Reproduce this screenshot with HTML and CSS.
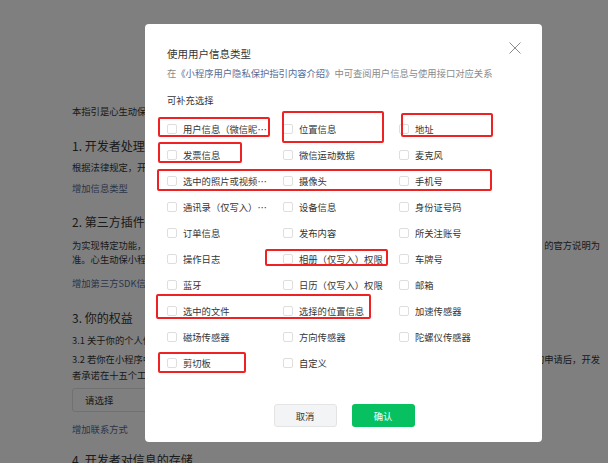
FILE: index.html
```html
<!DOCTYPE html>
<html lang="zh-CN">
<head>
    <meta charset="UTF-8">
    <meta name="viewport" content="width=device-width, initial-scale=1.0">
    <title>用户隐私保护指引</title>
    <link rel="stylesheet" href="styles.css">
</head>
<body>
    <div class="page">
        <p class="intro">本指引是心生动保小程序开发者为处理你的个人信息而制定。</p>

        <h2 class="sec-title">1. 开发者处理的信息</h2>
        <p class="para">根据法律规定，开发者仅处理实现小程序功能所必要的信息。</p>
        <a class="add-link">增加信息类型</a>

        <h2 class="sec-title sec-2">2. 第三方插件信息</h2>
        <p class="para line"><span>为实现特定功能，开发者可能会接入由第三方提供的插件。</span><span>的官方说明为</span></p>
        <p class="para">准。心生动保小程序已接入的第三方插件信息如下：</p>
        <a class="add-link link-sdk">增加第三方SDK信息</a>

        <h2 class="sec-title sec-3">3. 你的权益</h2>
        <p class="para p-31">3.1 关于你的个人信息，你可以通过以下方式与开发者联系。</p>
        <p class="para p-32 line"><span>3.2 若你在小程序中的个人信息受到侵害，</span><span>的申请后，开发</span></p>
        <p class="para p-32b">者承诺在十五个工作日内回复并处理。</p>
        <div class="select">请选择</div>
        <a class="add-link link-contact">增加联系方式</a>

        <h2 class="sec-title sec-4">4. 开发者对信息的存储</h2>
    </div>

    <div class="overlay">
        <div class="modal">
            <div class="modal-header">
                <h3 class="modal-title">使用用户信息类型</h3>
                <span class="close">
                    <svg width="12" height="12" viewBox="0 0 12 12"><path d="M0.5 0.5 L11.5 11.5 M11.5 0.5 L0.5 11.5" stroke="#8c8c8c" stroke-width="1" fill="none"/></svg>
                </span>
            </div>
            <p class="modal-desc">在<a class="desc-link">《小程序用户隐私保护指引内容介绍》</a>中可查阅用户信息与使用接口对应关系</p>
            <p class="modal-sub">可补充选择</p>

            <div class="check-grid">
                <label class="check"><span class="box"></span><span class="text">用户信息（微信昵称、头像）</span></label>
                <label class="check"><span class="box"></span><span class="text">位置信息</span></label>
                <label class="check"><span class="box"></span><span class="text">地址</span></label>

                <label class="check"><span class="box"></span><span class="text">发票信息</span></label>
                <label class="check"><span class="box"></span><span class="text">微信运动数据</span></label>
                <label class="check"><span class="box"></span><span class="text">麦克风</span></label>

                <label class="check"><span class="box"></span><span class="text">选中的照片或视频信息</span></label>
                <label class="check"><span class="box"></span><span class="text">摄像头</span></label>
                <label class="check"><span class="box"></span><span class="text">手机号</span></label>

                <label class="check"><span class="box"></span><span class="text">通讯录（仅写入）权限</span></label>
                <label class="check"><span class="box"></span><span class="text">设备信息</span></label>
                <label class="check"><span class="box"></span><span class="text">身份证号码</span></label>

                <label class="check"><span class="box"></span><span class="text">订单信息</span></label>
                <label class="check"><span class="box"></span><span class="text">发布内容</span></label>
                <label class="check"><span class="box"></span><span class="text">所关注账号</span></label>

                <label class="check"><span class="box"></span><span class="text">操作日志</span></label>
                <label class="check"><span class="box"></span><span class="text">相册（仅写入）权限</span></label>
                <label class="check"><span class="box"></span><span class="text">车牌号</span></label>

                <label class="check"><span class="box"></span><span class="text">蓝牙</span></label>
                <label class="check"><span class="box"></span><span class="text">日历（仅写入）权限</span></label>
                <label class="check"><span class="box"></span><span class="text">邮箱</span></label>

                <label class="check"><span class="box"></span><span class="text">选中的文件</span></label>
                <label class="check"><span class="box"></span><span class="text">选择的位置信息</span></label>
                <label class="check"><span class="box"></span><span class="text">加速传感器</span></label>

                <label class="check"><span class="box"></span><span class="text">磁场传感器</span></label>
                <label class="check"><span class="box"></span><span class="text">方向传感器</span></label>
                <label class="check"><span class="box"></span><span class="text">陀螺仪传感器</span></label>

                <label class="check"><span class="box"></span><span class="text">剪切板</span></label>
                <label class="check"><span class="box"></span><span class="text">自定义</span></label>
            </div>

            <div class="modal-footer">
                <button class="btn btn-default">取消</button>
                <button class="btn btn-primary">确认</button>
            </div>

            <!-- 标注框 -->
            <div class="mark" style="left:13px;top:93px;width:112px;height:20px"></div>
            <div class="mark" style="left:137px;top:87px;width:102px;height:32px"></div>
            <div class="mark" style="left:256px;top:89px;width:92px;height:24px"></div>
            <div class="mark" style="left:13px;top:118px;width:84px;height:21px"></div>
            <div class="mark" style="left:12px;top:145px;width:335px;height:22px"></div>
            <div class="mark" style="left:120px;top:225px;width:123px;height:17px"></div>
            <div class="mark" style="left:11px;top:270px;width:215px;height:25px"></div>
            <div class="mark" style="left:13px;top:328px;width:88px;height:21px"></div>
        </div>
    </div>
</body>
</html>
```

FILE: styles.css
```css
:root {
    --text-color: #353535;
    --desc-color: #8a8a8a;
    --link-color: #576b95;
    --green: #07c160;
    --border-color: #e2e2e2;
    --mark-color: #ee2222;
}

* {
    margin: 0;
    padding: 0;
    box-sizing: border-box;
}

body {
    font-family: "Noto Sans CJK SC", "Noto Sans", sans-serif;
    background: #fff;
    color: var(--text-color);
    font-size: 9.3px;
    overflow: hidden;
    height: 463px;
}

/* 背景页面 */
.page {
    padding: 104px 8px 0 72px;
}

.intro,
.para {
    line-height: 14px;
}

.line {
    display: flex;
    justify-content: space-between;
}

.sec-title {
    font-size: 12px;
    font-weight: normal;
    line-height: 18px;
    margin-top: 19px;
}

.para {
    margin-top: 5px;
}

.add-link {
    display: block;
    color: var(--link-color);
    line-height: 14px;
    margin-top: 7px;
}

.sec-2 { margin-top: 18px; }
.sec-2 + .para { margin-top: 7px; }
.sec-2 + .para + .para { margin-top: 0; }
.link-sdk { margin-top: 10px; }
.sec-3 { margin-top: 19px; }
.p-31 { margin-top: 6px; }
.p-32 { margin-top: 4px; line-height: 16px; }
.p-32b { margin-top: 0; line-height: 16px; }

.select {
    margin-top: 5px;
    width: 220px;
    height: 24px;
    line-height: 22px;
    padding-left: 12px;
    border: 1px solid var(--border-color);
    border-radius: 3px;
    font-size: 9.5px;
}

.link-contact { margin-top: 10px; }
.sec-4 { margin-top: 15px; }

/* 弹窗 */
.overlay {
    position: fixed;
    inset: 0;
    background: rgba(0, 0, 0, 0.5);
    padding: 24px 0 0 145px;
}

.modal {
    position: relative;
    width: 397px;
    height: 418px;
    background: #fff;
    border-radius: 4px;
    padding: 18px 21px 0 22px;
}

.modal-header {
    display: flex;
    justify-content: space-between;
    align-items: flex-start;
}

.modal-title {
    margin-top: 4px;
    font-size: 10.5px;
    font-weight: normal;
    line-height: 15px;
}

.close {
    width: 12px;
    height: 12px;
    display: flex;
}

.modal-desc {
    margin-top: 5px;
    line-height: 14px;
    color: var(--desc-color);
}

.desc-link {
    color: var(--link-color);
}

.modal-sub {
    margin-top: 13px;
    line-height: 14px;
}

.check-grid {
    margin-top: 9px;
    display: grid;
    grid-template-columns: repeat(3, 116px);
    grid-auto-rows: 26px;
}

.check {
    display: flex;
    align-items: center;
    gap: 6px;
}

.box {
    flex: none;
    width: 10px;
    height: 10px;
    border: 1px solid #dedede;
    border-radius: 2px;
    background: #fff;
}

.text {
    max-width: 86px;
    white-space: nowrap;
    overflow: hidden;
    text-overflow: ellipsis;
    line-height: 14px;
}

.modal-footer {
    margin-top: 28px;
    display: flex;
    justify-content: center;
    gap: 15px;
}

.btn {
    width: 63px;
    height: 23px;
    border-radius: 3px;
    font-family: inherit;
    font-size: 9.3px;
    border: 1px solid transparent;
}

.btn-default {
    background: #f3f4f6;
    border-color: #e4e4e4;
    color: var(--text-color);
}

.btn-primary {
    background: var(--green);
    color: #fff;
}

.mark {
    position: absolute;
    border: 2px solid var(--mark-color);
    border-radius: 2px;
}
```
